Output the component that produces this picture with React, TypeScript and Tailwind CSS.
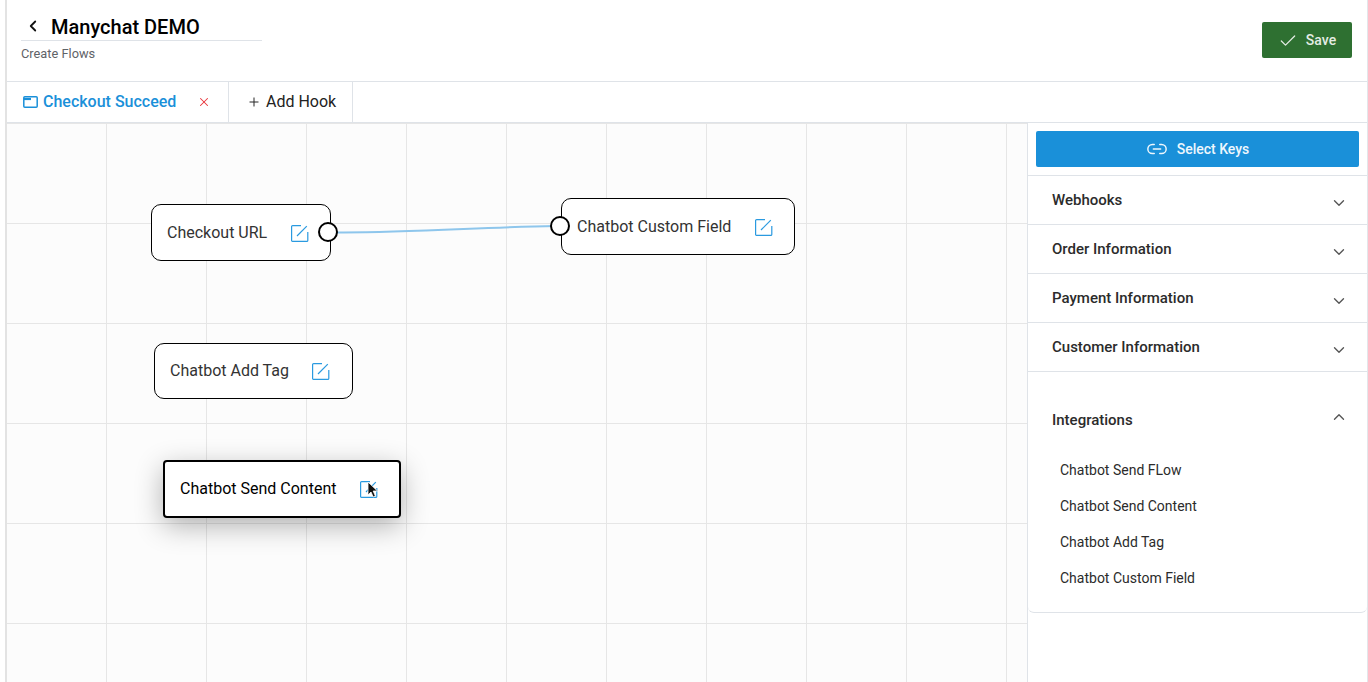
import { ChevronDown, ChevronLeft, ChevronUp, Check, Link2, Plus, X } from "lucide-react";

const sections = ["Webhooks", "Order Information", "Payment Information", "Customer Information"];
const integrations = ["Chatbot Send FLow", "Chatbot Send Content", "Chatbot Add Tag", "Chatbot Custom Field"];

const EditIcon = () => (
  <svg width="18" height="18" viewBox="0 0 18 18" fill="none" stroke="#2a9ae0" strokeWidth="1.2">
    <path d="M10 1.6H1.6a1 1 0 0 0-1 1v14a.8.8 0 0 0 .8.8h14.4a1 1 0 0 0 1-1V8" />
    <path d="M6 12 15.8 2.2" />
  </svg>
);

const Port = ({ className }: { className: string }) => (
  <span className={`absolute top-1/2 -mt-[1px] h-[20px] w-[20px] -translate-y-1/2 rounded-full border-2 border-black bg-white ${className}`} />
);

const App = () => {
  return (
    <div className="ml-[5px] flex h-[682px] w-[1363px] flex-col overflow-hidden border-r border-l-[2px] border-r-[#e3e6ea] border-l-[#e3e3e3] bg-white font-['Roboto',sans-serif]">
      <header className="flex h-[82px] shrink-0 items-start justify-between border-b border-[#dfe3e8]">
        <div className="pl-[14px] pt-[14px]">
          <div className="flex h-[27px] w-[241px] items-center border-b border-[#dfe3e8]">
            <ChevronLeft size={18} strokeWidth={2.4} className="-mt-[2px] ml-[3px] text-[#111]" />
            <span className="-mt-[1px] ml-[9px] text-[20px] leading-none font-medium text-black">Manychat DEMO</span>
          </div>
          <p className="mt-[5px] text-[12.8px] leading-[16px] text-[#5f6368]">Create Flows</p>
        </div>
        <button className="mt-[22px] mr-[15px] flex h-[36px] w-[90px] items-center justify-center gap-[8px] rounded-[2px] bg-[#2e7031] pt-[1px] text-[14px] font-medium text-[#e4ece4]">
          <Check size={20} strokeWidth={1.5} />
          Save
        </button>
      </header>

      <div className="flex h-[41px] shrink-0 border-b border-[#dfe3e8]">
        <div className="flex w-[222px] items-center border-r border-[#dfe3e8] pl-[16px]">
          <svg width="15" height="12" viewBox="0 0 15 12" fill="none" stroke="#1a90d9" strokeWidth="1.5">
            <rect x="0.8" y="0.8" width="13.4" height="10.4" rx="1" />
            <path d="M1 3h7" strokeWidth="2.2" />
          </svg>
          <span className="ml-[5px] text-[16px] font-medium text-[#1a90d9]">Checkout Succeed</span>
          <X size={14} strokeWidth={1.8} className="ml-[21px] text-[#e8353a]" />
        </div>
        <div className="flex w-[124px] items-center border-r border-[#dfe3e8] pl-[18px] text-[16px] text-[#222]">
          <Plus size={14} strokeWidth={1.7} />
          <span className="ml-[5px]">Add Hook</span>
        </div>
      </div>

      <div className="flex min-h-0 flex-1">
        <main className="relative w-[1020px] shrink-0 bg-[#fcfcfc] bg-[linear-gradient(to_right,#e6e6e6_1px,transparent_1px),linear-gradient(to_bottom,#e6e6e6_1px,transparent_1px)] bg-[size:100px_100px] bg-[position:-1px_0px]">
          <svg className="absolute top-0 left-0" width="600" height="200" fill="none">
            <path d="M330 109.5C400 110 480 104 548 103" stroke="#8ec6ec" strokeWidth="2" />
          </svg>

          <div className="absolute top-[81px] left-[144px] flex h-[57px] w-[180px] items-center rounded-[10px] border border-black bg-white pl-[15px] text-[16px] text-[#333]">
            Checkout URL
            <span className="ml-[23.5px] flex"><EditIcon /></span>
            <Port className="-right-[8px]" />
          </div>

          <div className="absolute top-[75px] left-[554px] flex h-[57px] w-[234px] items-center rounded-[10px] border border-black bg-white pl-[15px] text-[16px] text-[#333]">
            Chatbot Custom Field
            <span className="ml-[23.5px] flex"><EditIcon /></span>
            <Port className="-left-[12px]" />
          </div>

          <div className="absolute top-[220px] left-[147px] flex h-[56px] w-[199px] items-center rounded-[10px] border border-black bg-white pl-[15px] text-[16px] text-[#333]">
            Chatbot Add Tag
            <span className="ml-[23.5px] flex"><EditIcon /></span>
          </div>

          <div className="absolute top-[337px] left-[156px] flex h-[58px] w-[238px] items-center rounded-[4px] border-2 border-black bg-white pl-[15px] text-[16px] text-black shadow-[0_8px_28px_rgba(0,0,0,0.3)]">
            Chatbot Send Content
            <span className="relative ml-[23.5px] flex">
              <EditIcon />
              <svg className="absolute top-[1px] left-[7px]" width="12" height="18" viewBox="0 0 12 18">
                <path d="M1 1v13l3-3 2.2 5 2.2-1-2.2-5h4.3z" fill="#111" stroke="#fff" strokeWidth="0.8" />
              </svg>
            </span>
          </div>
        </main>

        <aside className="flex-1 border-l border-[#dfe3e8]">
          <div className="h-[53px] border-b border-[#dfe3e8] pt-[8px] pl-[8px]">
            <button className="flex h-[36px] w-[323px] items-center justify-center gap-[9px] rounded-[2px] bg-[#1a90d9] text-[14px] font-medium text-[#eef7fd]">
              <Link2 size={22} strokeWidth={1.6} />
              Select Keys
            </button>
          </div>
          {sections.map((name) => (
            <div key={name} className="flex h-[49px] items-center justify-between border-b border-[#dfe3e8] pr-[20px] pl-[24px] text-[15px] font-medium text-[#2b2b2b]">
              <span className="mt-[1px]">{name}</span>
              <ChevronDown size={18} strokeWidth={1.8} className="mt-[5px] -mr-[1px] text-[#555]" />
            </div>
          ))}
          <div className="h-[241px] rounded-b-[6px] border-b border-[#dfe3e8] pt-[38px] pr-[20px] pl-[24px]">
            <div className="flex items-center justify-between text-[15px] font-medium text-[#2b2b2b]">
              <span className="leading-[20px]">Integrations</span>
              <ChevronUp size={18} strokeWidth={1.8} className="-mt-[7px] -mr-[1px] text-[#555]" />
            </div>
            <ul className="mt-[30px] pl-[8px]">
              {integrations.map((item) => (
                <li key={item} className="h-[36px] text-[14px] leading-[20px] text-[#2b2b2b]">{item}</li>
              ))}
            </ul>
          </div>
        </aside>
      </div>
    </div>
  );
};

export default App;
